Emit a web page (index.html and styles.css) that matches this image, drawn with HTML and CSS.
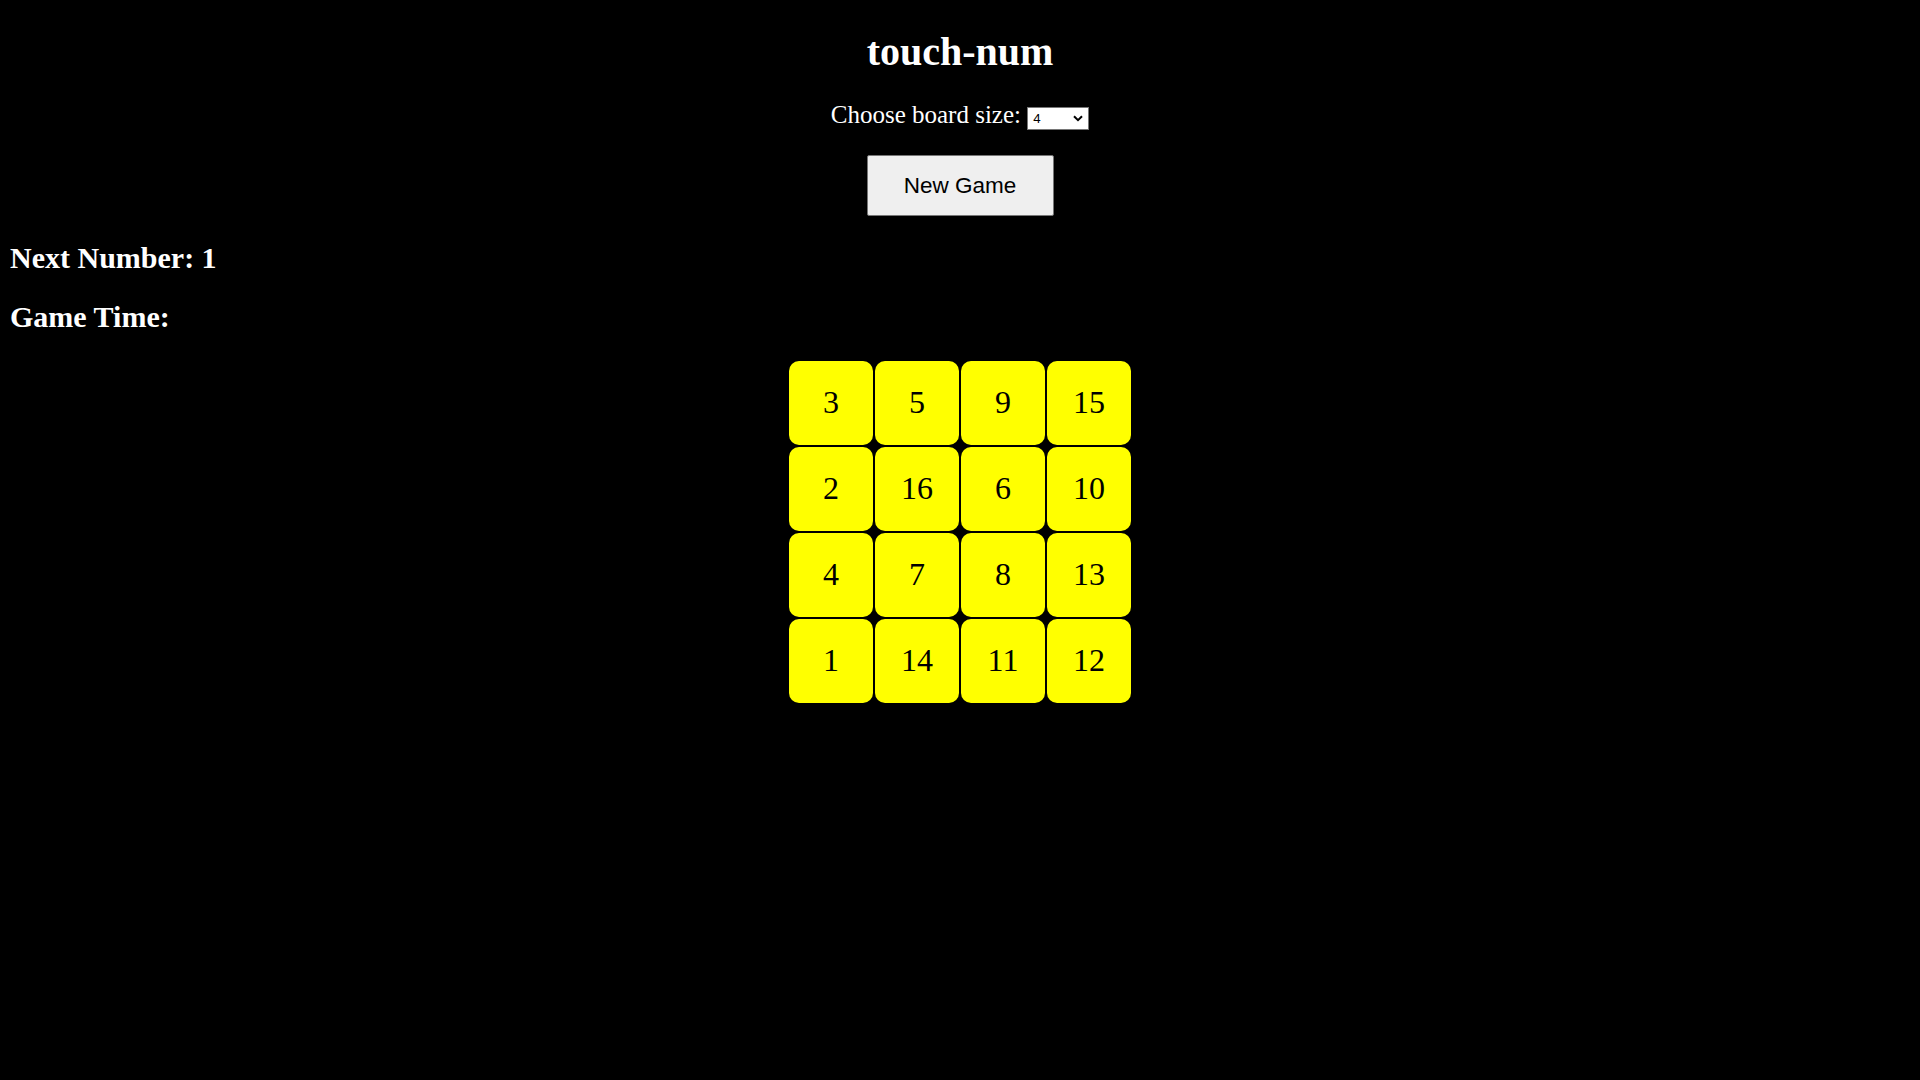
FILE: index.html
```html
<!DOCTYPE html>
<html lang="en">
<head>
<meta charset="utf-8">
<title>touch-num</title>
<link rel="stylesheet" href="styles.css">
</head>
<body>
  <h1 class="title">touch-num</h1>
  <p class="size-row">
    <label for="size" class="size-label">Choose board size:</label>
    <span class="select-wrap">
      <select id="size" class="size-select">
        <option>3</option>
        <option selected>4</option>
        <option>5</option>
      </select>
      <svg class="chevron" width="10" height="7" viewBox="0 0 10 7" aria-hidden="true">
        <path d="M1 1.2 L5 5.2 L9 1.2" fill="none" stroke="#000" stroke-width="2"/>
      </svg>
    </span>
  </p>
  <div class="controls">
    <button class="new-game">New Game</button>
  </div>
  <h2 class="status">Next Number: 1</h2>
  <h2 class="status">Game Time:</h2>
  <div class="board">
    <div class="tile">3</div>
    <div class="tile">5</div>
    <div class="tile">9</div>
    <div class="tile">15</div>
    <div class="tile">2</div>
    <div class="tile">16</div>
    <div class="tile">6</div>
    <div class="tile">10</div>
    <div class="tile">4</div>
    <div class="tile">7</div>
    <div class="tile">8</div>
    <div class="tile">13</div>
    <div class="tile">1</div>
    <div class="tile">14</div>
    <div class="tile">11</div>
    <div class="tile">12</div>
  </div>
</body>
</html>
```
FILE: styles.css
```css
html, body {
  background: #000;
}
body {
  margin: 0 10px 10px;
  padding-top: 1px;
  color: #fff;
  font-family: "Liberation Serif", "Times New Roman", serif;
}
.title {
  font-size: 40px;
  font-weight: bold;
  text-align: center;
  margin: 26.5px 0 26.8px;
}
.size-row {
  font-size: 25px;
  text-align: center;
  margin: 25px 0;
}
.select-wrap {
  position: relative;
  display: inline-block;
  vertical-align: baseline;
}
.size-select {
  -webkit-appearance: none;
  appearance: none;
  display: block;
  box-sizing: border-box;
  width: 62px;
  height: 23px;
  font-family: "Liberation Sans", Arial, sans-serif;
  font-size: 13.3px;
  background: #fff;
  color: #000;
  border: 1px solid #767676;
  border-radius: 0;
  padding: 0 0 0 5px;
  margin: 0;
}
.chevron {
  position: absolute;
  right: 6px;
  top: 8px;
  pointer-events: none;
}
.controls {
  display: flex;
  justify-content: center;
}
.new-game {
  width: 187px;
  height: 61px;
  background: #efefef;
  color: #000;
  border: 1px solid #767676;
  border-radius: 2px;
  font-family: "Liberation Sans", Arial, sans-serif;
  font-size: 22.5px;
  padding: 0;
}
.status {
  font-size: 30px;
  font-weight: bold;
  margin: 24.9px 0;
}
.board {
  display: grid;
  grid-template-columns: repeat(4, 83.5px);
  grid-auto-rows: 83.5px;
  gap: 2.5px;
  justify-content: center;
  margin-top: 27px;
}
.tile {
  background: #ffff00;
  color: #000;
  border-radius: 10px;
  display: flex;
  align-items: center;
  justify-content: center;
  font-size: 32px;
}
```
